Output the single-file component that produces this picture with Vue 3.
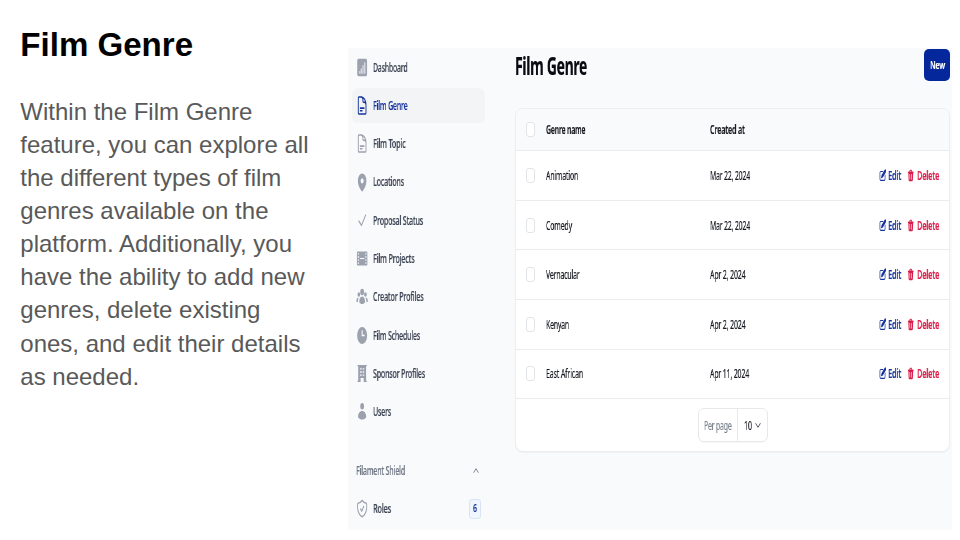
<script setup>
import { defineComponent, h, onMounted, ref } from 'vue'

// Condensed label: text scaled horizontally to fit a given width.
const Fit = defineComponent({
  props: { t: String, w: Number },
  setup(props) {
    const el = ref(null)
    const scale = ref(1)
    onMounted(() => {
      scale.value = props.w / el.value.getBoundingClientRect().width
    })
    return () =>
      h('span', { class: 'fit', style: { width: props.w + 'px' } }, [
        h('span', { ref: el, class: 'fit-text', style: { transform: `scaleX(${scale.value})` } }, props.t),
      ])
  },
})

const lines = [
  'Within the Film Genre',
  'feature, you can explore all',
  'the different types of film',
  'genres available on the',
  'platform. Additionally, you',
  'have the ability to add new',
  'genres, delete existing',
  'ones, and edit their details',
  'as needed.',
]

const doc = 'M19.5 14.25v-2.6a3.4 3.4 0 0 0-3.4-3.4h-1.5a1.1 1.1 0 0 1-1.1-1.1v-1.5a3.4 3.4 0 0 0-3.4-3.4H5.6c-.6 0-1.1.5-1.1 1.1v17.3c0 .6.5 1.1 1.1 1.1h12.8c.6 0 1.1-.5 1.1-1.1V11.3a9 9 0 0 0-9-9M8.3 15h7.5M8.3 18H12'

const nav = [
  { t: 'Dashboard', w: 34.5, solid: 'M5 2h14a2.6 2.2 0 0 1 2.6 2.2v15.6A2.6 2.2 0 0 1 19 22H5a2.6 2.2 0 0 1-2.6-2.2V4.2A2.6 2.2 0 0 1 5 2Z', bars: 'M6 16v3h2.4v-3ZM9.1 13v6h2.6v-6ZM12.4 9.5v9.5h2.600V9.500ZM15.700 6v13H18.400V6Z' },
  { t: 'Film Genre', w: 34.5, line: doc, active: true },
  { t: 'Film Topic', w: 32.5, line: doc },
  { t: 'Locations', w: 31, solid: 'M12 22.5C9 20.5 3.7 16 3.7 10A8.3 8.3 0 0 1 20.3 10c0 6-5.3 10.5-8.3 12.5ZM12 7a3 3 0 1 0 0 6 3 3 0 0 0 0-6Z' },
  { t: 'Proposal Status', w: 50, line: 'm5.5 12.8 5.2 4.8 8.1-11.7' },
  { t: 'Film Projects', w: 41.5, solid: 'M3.5 4h17c1 0 1.7.6 1.7 1.5v13c0 .9-.7 1.5-1.7 1.5h-17c-1 0-1.7-.6-1.7-1.5v-13C1.8 4.6 2.5 4 3.5 4ZM3.5 6v1.5H6V6ZM3.5 9.5V11H6V9.5ZM3.5 13v1.5H6V13ZM3.5 16.5V18H6v-1.5ZM18 6v1.5h2.5V6ZM18 9.5V11h2.5V9.5ZM18 13v1.5h2.5V13ZM18 16.5V18h2.5v-1.5ZM7.5 11.4v1.2h9v-1.2Z' },
  { t: 'Creator Profiles', w: 50.5, solid: 'M8.3 6.8a3.7 3.7 0 1 1 7.4 0 3.7 3.7 0 0 1-7.4 0ZM15.8 9.8a2.6 2.6 0 1 1 5.2 0 2.6 2.6 0 0 1-5.2 0ZM3 9.8a2.6 2.6 0 1 1 5.2 0 2.6 2.6 0 0 1-5.2 0ZM6.3 18.5c0-4 2-6.6 5.7-6.6s5.7 2.6 5.7 6.6c-1.5 1.3-3.5 2-5.7 2s-4.2-.7-5.7-2ZM5.1 13.5c-1 1.5-1.5 3.2-1.4 5.2-1.5-.1-2.6-.6-2.9-1-.2-2.7 1.7-4.7 4.3-4.2ZM18.9 13.5c1 1.5 1.5 3.2 1.4 5.2 1.5-.1 2.6-.6 2.9-1 .2-2.7-1.7-4.7-4.3-4.2Z' },
  { t: 'Film Schedules', w: 47, solid: 'M12 2.25a9.75 9.75 0 1 0 0 19.5 9.75 9.75 0 0 0 0-19.5ZM11 6v6.75h6v-1.5h-4V6Z' },
  { t: 'Sponsor Profiles', w: 52, solid: 'M3 2.25h18v1.5h-1.3v16.5H21v1.5h-6v-4.5H9v4.5H3v-1.5h1.3V3.75H3ZM8 6v1.5h3V6ZM13 6v1.5h3V6ZM8 9.5V11h3V9.5ZM13 9.5V11h3V9.5ZM8 13v1.5h3V13ZM13 13v1.5h3V13Z' },
  { t: 'Users', w: 18, solid: 'M8.3 6a3.7 3.7 0 1 1 7.4 0 3.7 3.7 0 0 1-7.4 0ZM4 18.5c0-4.5 3.5-7 8-7s8 2.500 8 7c-2 1.700-5 2.600-8 2.600s-6-.9-8-2.600Z' },
]

const rows = [
  { name: 'Animation', w: 32, date: 'Mar 22, 2024', dw: 40 },
  { name: 'Comedy', w: 26, date: 'Mar 22, 2024', dw: 40 },
  { name: 'Vernacular', w: 33.5, date: 'Apr 2, 2024', dw: 35.5 },
  { name: 'Kenyan', w: 23, date: 'Apr 2, 2024', dw: 35.5 },
  { name: 'East African', w: 37, date: 'Apr 11, 2024', dw: 39 },
]
</script>

<template>
  <div class="slide">
    <section class="copy">
      <h1>Film Genre</h1>
      <p><span v-for="l in lines" :key="l">{{ l }}</span></p>
    </section>

    <div class="app">
      <nav class="side">
        <div v-for="n in nav" :key="n.t" class="item" :class="{ active: n.active }">
          <div class="pill">
            <svg class="ico" viewBox="0 0 24 24" preserveAspectRatio="none">
              <path v-if="n.solid" class="solid" :d="n.solid" />
              <path v-else class="line" :d="n.line" />
              <path v-if="n.bars" class="bars" :d="n.bars" />
            </svg>
            <Fit :t="n.t" :w="n.w" />
          </div>
        </div>
        <div class="group">
          <Fit t="Filament Shield" :w="49" />
          <svg class="chev" viewBox="0 0 6 6"><path d="M.6 5.2 3 1.2 5.400 5.200" /></svg>
        </div>
        <div class="item">
          <div class="pill">
            <svg class="ico" viewBox="0 0 24 24" preserveAspectRatio="none">
              <path class="line" d="M9 12.75 11.25 15 15 9.75M12 2.7A12 12 0 0 1 3.6 6 12 12 0 0 0 3 9.750c0 5.600 3.800 10.300 9 11.600 5.200-1.300 9-6 9-11.600 0-1.300-.2-2.600-.6-3.750A12 12 0 0 1 12 2.700Z" />
            </svg>
            <Fit t="Roles" :w="18" />
            <span class="badge"><Fit t="6" :w="3.8" /></span>
          </div>
        </div>
      </nav>

      <main class="main">
        <header class="head">
          <Fit class="title" t="Film Genre" :w="72" />
          <button class="new"><Fit t="New" :w="15" /></button>
        </header>

        <div class="card">
          <div class="row th">
            <i class="check"></i>
            <div class="name"><Fit t="Genre name" :w="39.3" /></div>
            <Fit t="Created at" :w="34.8" />
          </div>
          <div v-for="r in rows" :key="r.name" class="row">
            <i class="check"></i>
            <div class="name"><Fit :t="r.name" :w="r.w" /></div>
            <Fit :t="r.date" :w="r.dw" />
            <div class="acts">
              <span class="act edit">
                <svg viewBox="0 0 20 20" preserveAspectRatio="none"><path class="solid" d="m5.4 13.9 1-3.5c.1-.5.4-.9.7-1.2L15.2 1.1a2.5 2.5 0 0 1 3.5 3.5l-8.1 8.1c-.3.300-.7.600-1.200.7l-3.500 1a.4.4 0 0 1-.5-.5Z" /><path class="line" d="M10.500 3.800H4.800A2.200 2.200 0 0 0 2.500 6v9.200a2.200 2.200 0 0 0 2.300 2.300H14a2.200 2.200 0 0 0 2.200-2.300V9.500" /></svg>
                <Fit t="Edit" :w="13.2" />
              </span>
              <span class="act del">
                <svg viewBox="0 0 20 20" preserveAspectRatio="none"><path class="solid" d="M6.5 4v-.6C6.5 2 7.5 1 8.8 1h2.400c1.300 0 2.300 1 2.300 2.400V4l4 .4v1.800l-1 .1-.8 10.300c-.1 1.400-1.200 2.400-2.600 2.400H6.900c-1.400 0-2.500-1-2.600-2.400L3.500 6.300l-1-.1V4.400ZM8.300 3.800h3.400c0-.8-.2-1.100-.7-1.100H9c-.5 0-.7.3-.7 1.100ZM6.700 7.500l.3 8.500h1.500L8.200 7.500ZM11.800 7.500l-.3 8.500H13l.3-8.500Z" /></svg>
                <Fit t="Delete" :w="22.3" />
              </span>
            </div>
          </div>
          <footer class="foot">
            <div class="pager">
              <span class="lab"><Fit t="Per page" :w="27.5" /></span>
              <span class="val"><Fit t="10" :w="7.8" /><svg class="chev" viewBox="0 0 6 6"><path d="M.6 .8 3 4.800 5.400 .8" /></svg></span>
            </div>
          </footer>
        </div>
      </main>
    </div>
  </div>
</template>

<style>
body { margin: 0; background: #fff; overflow: hidden; }
.fit { display: block; flex: none; white-space: nowrap; line-height: 1.3; }
.fit-text { display: inline-block; vertical-align: top; transform-origin: 0 50%; letter-spacing: -.025em; -webkit-text-stroke: .2px currentColor; will-change: transform; }
</style>

<style scoped>
.slide { display: flex; box-sizing: border-box; width: 960px; height: 540px; background: #fff; overflow: hidden; }
.copy { width: 348px; flex: none; box-sizing: border-box; padding: 25px 0 0 20.3px; font-family: "Liberation Sans", Arial, sans-serif; }
h1 { margin: 0; font-size: 33.1px; line-height: 40px; font-weight: 700; color: #000; white-space: nowrap; }
p { margin: 29.9px 0 0; font-size: 24px; line-height: 33.1px; color: #595959; }
p span { display: block; white-space: nowrap; }

.app { display: flex; box-sizing: border-box; width: 604px; height: 482px; margin-top: 48px; flex: none; background: #f9fafc; font-family: "Noto Sans", "Open Sans", sans-serif; font-size: 11.7px; color: #15181f; }
.side { width: 167.3px; flex: none; font-weight: 500; color: #3b4352; }
.item { height: 38.3px; display: flex; align-items: center; }
.pill { display: flex; align-items: center; box-sizing: border-box; width: 132.5px; height: 35px; margin-left: 4px; padding: 0 4px 0 3.5px; gap: 5.5px; border-radius: 6px; }
.active .pill { background: #f3f4f6; color: #17349b; }
.ico { width: 12.3px; height: 21px; flex: none; color: #9ba1ad; }
.active .ico { color: #17349b; }
.solid { fill: currentColor; fill-rule: evenodd; }
.bars { fill: #d5d9df; }
.line { fill: none; stroke: currentColor; stroke-width: 1.8; stroke-linecap: round; stroke-linejoin: round; }
.group { display: flex; align-items: center; justify-content: space-between; height: 38.3px; margin-top: 20.3px; padding: 0 36.2px 0 8px; color: #6f7683; }
.chev { width: 6px; height: 7px; }
.chev path { fill: none; stroke: #858b97; stroke-width: 1; }
.badge { display: flex; align-items: center; justify-content: center; box-sizing: border-box; width: 11.5px; height: 20px; margin-left: auto; border: 1px solid #d9e5f4; border-radius: 3px; background: #f0f6fd; color: #17349b; font-size: 10.5px; font-weight: 600; }

.main { width: 435px; flex: none; }
.head { display: flex; align-items: center; justify-content: space-between; height: 32px; padding-top: 1px; }
.title { font-size: 25px; font-weight: 700; color: #090b13; }
.new { display: flex; align-items: center; justify-content: center; width: 26px; height: 32px; padding: 0; border: 0; border-radius: 5px; background: #04279b; color: #fff; font: 600 11.5px "Noto Sans", sans-serif; }
.card { box-sizing: border-box; margin-top: 26.5px; height: 344.5px; border: 1px solid #eceef0; border-radius: 8px; background: #fff; box-shadow: 0 1px 1px rgba(0, 0, 0, .04); overflow: hidden; }
.row { display: flex; align-items: center; box-sizing: border-box; height: 49.6px; padding: 0 10.5px 0 10px; border-bottom: 1.5px solid #ebecee; }
.th { height: 42.8px; background: #f9fafb; font-weight: 600; }
.check { box-sizing: border-box; width: 9px; height: 15px; flex: none; border: 1px solid #e2e4e8; border-radius: 3px; background: #fff; }
.name { width: 164px; margin-left: 10.7px; flex: none; }
.acts { display: flex; gap: 6.3px; margin-left: auto; font-weight: 600; }
.act { display: flex; align-items: center; gap: 1.6px; }
.act > svg { width: 7.5px; height: 13px; flex: none; }
.edit { color: #17349b; }
.del { color: #da1e4b; }
.foot { display: flex; justify-content: center; padding: 9px 0 0; }
.pager { display: flex; box-sizing: border-box; height: 34px; border: 1px solid #e6e8eb; border-radius: 6px; box-shadow: 0 1px 1px rgba(0, 0, 0, .03); }
.lab, .val { display: flex; align-items: center; padding: 0 5.5px; }
.lab { color: #7b818d; border-right: 1px solid #e6e8eb; }
.val { gap: 4px; }
.val .chev path { stroke: #555c69; }
</style>
